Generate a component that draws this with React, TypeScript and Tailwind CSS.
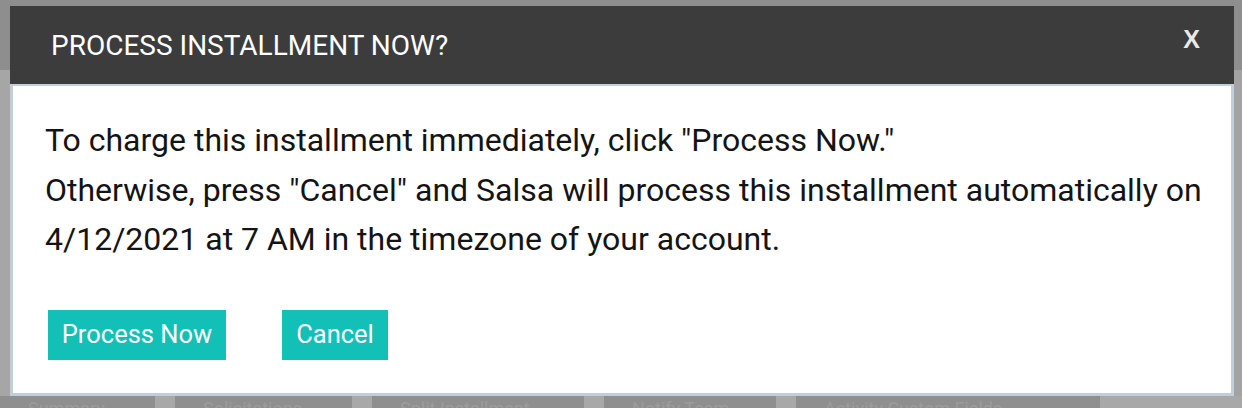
import React from "react";

const tabs = [
  { w: "w-[155px]", label: "Summary" },
  { w: "w-[177px]", label: "Solicitations" },
  { w: "w-[212px]", label: "Split Installment" },
  { w: "w-[172px]", label: "Notify Team" },
  { w: "w-[304px]", label: "Activity Custom Fields" },
];

const App: React.FC = () => {
  return (
    <div
      className="relative w-[1242px] h-[408px] overflow-hidden bg-[#8e8e8e]"
      style={{ fontFamily: "Roboto, 'Liberation Sans', sans-serif" }}
    >
      {/* dimmed page underneath */}
      <div className="absolute left-0 top-[70px] w-[10px] h-[326px] bg-[#a6a6a6]" />
      <div className="absolute right-0 top-[70px] w-[10px] h-[326px] bg-[#a3a3a3]" />
      <div className="absolute left-0 top-[396px] flex gap-[20px] bg-[#a8a8a8] w-full h-[12px]">
        {tabs.map((t) => (
          <div key={t.label} className={`${t.w} h-full bg-[#8f8f8f] text-[#9c9c9c] text-[18px] leading-[26px] pl-[28px] overflow-hidden`}>
            {t.label}
          </div>
        ))}
      </div>

      {/* modal */}
      <div className="relative ml-[10px] mt-[6px] w-[1224px] h-[390px] flex flex-col">
        <div className="h-[78px] bg-[#3c3c3c] flex items-center justify-between pl-[41px] pr-[34px]">
          <h1 className="text-white text-[28px] leading-[32px] pt-[2px]">PROCESS INSTALLMENT NOW?</h1>
          <button
            className="text-[#e9e9e9] text-[25px] font-bold -mt-[10px]"
            style={{ fontFamily: "'Liberation Sans', Arial, sans-serif" }}
          >
            X
          </button>
        </div>
        <div className="flex-1 bg-white border-[#c3cedb] border-x-[3px] border-b-[3px] border-t-[2px] pl-[32px] pt-[30px]">
          <div className="text-[#141414] text-[32px] leading-[49.5px]">
            <p>To charge this installment immediately, click "Process Now."</p>
            <p>Otherwise, press "Cancel" and Salsa will process this installment automatically on</p>
            <p>4/12/2021 at 7 AM in the timezone of your account.</p>
          </div>
          <div className="flex gap-[56px] mt-[45px] ml-[3px]">
            <button className="h-[50px] w-[178px] bg-[#13c0b7] text-white text-[25.5px]">Process Now</button>
            <button className="h-[50px] w-[106px] bg-[#13c0b7] text-white text-[25.5px]">Cancel</button>
          </div>
        </div>
      </div>
    </div>
  );
};

export default App;
